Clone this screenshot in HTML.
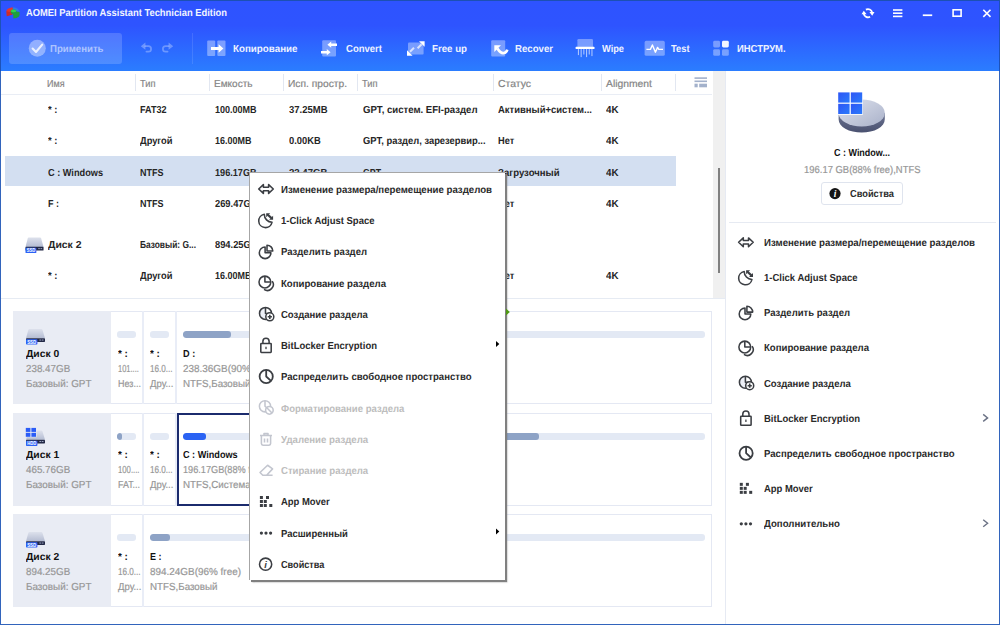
<!DOCTYPE html>
<html lang="ru">
<head>
<meta charset="utf-8">
<title>AOMEI Partition Assistant Technician Edition</title>
<style>
*{box-sizing:border-box;margin:0;padding:0}
html,body{width:1000px;height:625px;overflow:hidden;background:#fff}
body{position:relative;font-family:"Liberation Sans",sans-serif}
.a{position:absolute}
.t{position:absolute;white-space:pre;text-rendering:geometricPrecision;line-height:14px;height:14px;transform-origin:0 50%;display:block}
.title{font-size:10.2px;font-weight:700;color:#f2f5ff}
.tb{font-size:10.2px;font-weight:700;color:#eef2ff}
.apply{font-size:10.2px;font-weight:700;color:rgba(255,255,255,0.55)}
.hdr{font-size:10.2px;font-weight:400;color:#858585;-webkit-text-stroke:0.2px #858585}
.row{font-size:10.2px;font-weight:700;color:#262626}
.menu{font-size:10.2px;font-weight:700;color:#2a2a2a}
.menud{font-size:10.2px;font-weight:700;color:#bdbdbd}
.dname{font-size:10.2px;font-weight:700;color:#111111}
.dsub{font-size:10.2px;font-weight:400;color:#979797;-webkit-text-stroke:0.2px #979797}
.rp{font-size:10.2px;font-weight:700;color:#2a2a2a}
.rpt{font-size:10.2px;font-weight:700;color:#111111}
.rps{font-size:10.2px;font-weight:400;color:#979797;-webkit-text-stroke:0.2px #979797}
.btn{font-size:10.2px;font-weight:700;color:#2a2a2a}
svg{position:absolute;overflow:visible}
#win{position:absolute;left:0;top:0;width:1000px;height:625px;border:1px solid #3264bc;border-top:1px solid #1c50b4;pointer-events:none;z-index:50}
#titlebar{left:0;top:0;width:1000px;height:71px;background:linear-gradient(180deg,#2e53ff 0%,#2e54ff 36%,#2b7dff 100%)}
#apply{left:9px;top:33px;width:113px;height:31px;border-radius:3px;background:rgba(255,255,255,0.17)}
#tsep{left:192px;top:33px;width:1px;height:31px;background:rgba(255,255,255,0.11)}
#left{left:1px;top:71px;width:712px;height:553px;background:#fff}
#gap{left:713px;top:71px;width:12px;height:227px;background:#f0f0f0}
#gapline{left:725px;top:71px;width:1px;height:553px;background:#e6eaf3}
#right{left:726px;top:71px;width:273px;height:553px;background:#fff}
.hsep{width:1px;height:17px;top:74px;background:#e2e7f1}
#hline{left:1px;top:94px;width:711px;height:1px;background:#e9edf5}
#sel{left:5px;top:156px;width:671px;height:30px;background:#d3dff1}
#vscroll{left:718px;top:168px;width:2px;height:105px;background:#808080}
#divider{left:1px;top:298px;width:724px;height:1px;background:#e6ebf3}
.disk{left:13px;width:699px;height:93px;border:1px solid #e4e8f3;background:#fff}
.dlabel{left:13px;width:98px;height:93px;background:#e9ecf4}
.cellsep{width:2px;height:93px;background:#e9edf7}
.bar{height:7px;border-radius:3px;background:#e3e9f4;overflow:hidden}
.bar i{display:block;height:7px;border-radius:3px;background:#8ea3c6}
#selpart{left:177px;top:413px;width:200px;height:93px;border:2px solid #1b2b6d;background:#fff}
#menu{left:249px;top:172px;width:256px;height:408px;background:#fff;border-left:1px solid #a6a6a6;border-top:1px solid #a6a6a6;box-shadow:2px 2px 0 #808080,2.5px 2.5px 1.5px rgba(90,90,90,0.6)}
#rbtn{left:821px;top:182px;width:82px;height:23px;border:1px solid #dfe4ee;border-radius:3px;background:#fff}
#rsep{left:729px;top:222px;width:267px;height:1px;background:#e6eaf2}
</style>
</head>
<body>
<div class="a" id="titlebar"></div>
<div class="a" id="apply"></div>
<div class="a" id="tsep"></div>
<div class="a" id="left"></div>
<div class="a" id="gap"></div>
<div class="a" id="gapline"></div>
<div class="a" id="right"></div>
<div class="a hsep" style="left:135px"></div>
<div class="a hsep" style="left:209px"></div>
<div class="a hsep" style="left:283px"></div>
<div class="a hsep" style="left:357px"></div>
<div class="a hsep" style="left:493px"></div>
<div class="a hsep" style="left:601px"></div>
<div class="a hsep" style="left:675px"></div>
<div class="a" id="hline"></div>
<div class="a" id="sel"></div>
<div class="a" id="vscroll"></div>
<div class="a" id="divider"></div>

<!-- disk map -->
<div class="a disk" style="top:311px"></div>
<div class="a disk" style="top:413px"></div>
<div class="a disk" style="top:514px"></div>
<div class="a dlabel" style="top:311px"></div>
<div class="a dlabel" style="top:413px"></div>
<div class="a dlabel" style="top:514px"></div>
<div class="a cellsep" style="left:142px;top:311px"></div>
<div class="a cellsep" style="left:175px;top:311px"></div>
<div class="a cellsep" style="left:142px;top:413px"></div>
<div class="a cellsep" style="left:175px;top:413px"></div>
<div class="a cellsep" style="left:142px;top:514px"></div>
<div class="a" id="selpart"></div>
<div class="a bar" style="left:117px;top:331px;width:19px"></div>
<div class="a bar" style="left:150px;top:331px;width:19px"></div>
<div class="a bar" style="left:183px;top:331px;width:522px"><i style="width:48px"></i></div>
<div class="a bar" style="left:117px;top:433px;width:19px"><i style="width:5px;background:#8ea3c6"></i></div>
<div class="a bar" style="left:150px;top:433px;width:19px"></div>
<div class="a bar" style="left:183px;top:433px;width:186px"><i style="width:23px;background:#2b63f3"></i></div>
<div class="a bar" style="left:382px;top:433px;width:323px"><i style="width:157px"></i></div>
<div class="a bar" style="left:117px;top:534px;width:19px"></div>
<div class="a bar" style="left:150px;top:534px;width:555px"><i style="width:20px"></i></div>

<div class="a" id="rbtn"></div>
<div class="a" id="rsep"></div>
<svg width="1000" height="625" viewBox="0 0 1000 625" style="left:0;top:0">
<defs>
<linearGradient id="gdisk" x1="0" y1="0" x2="1" y2="1"><stop offset="0" stop-color="#dfe3ee"/><stop offset="1" stop-color="#a9b1c9"/></linearGradient>
<linearGradient id="gside" x1="0" y1="0" x2="0" y2="1"><stop offset="0" stop-color="#6b7391"/><stop offset="1" stop-color="#4a5170"/></linearGradient>
<linearGradient id="gwin" x1="0" y1="0" x2="1" y2="1"><stop offset="0" stop-color="#2f55f5"/><stop offset="1" stop-color="#2a7bfb"/></linearGradient>
<linearGradient id="gtop" x1="0" y1="0" x2="0" y2="1"><stop offset="0" stop-color="#dde1ec"/><stop offset="1" stop-color="#b4bcd2"/></linearGradient>
</defs>

<!-- app logo -->
<g>
 <path d="M6.4 11.2 Q6.2 8.2 12.6 7.2 L13.2 11.2 L10.4 12.2 L12.6 14.6 L6.8 16.2 Z" fill="#e8352f"/>
 <path d="M6.4 11.2 L6.8 16.2 L12.6 14.6 L12.4 12.5 Z" fill="#b42622" opacity=".55"/>
 <path d="M13 7.2 Q18.6 7.6 19.6 11.8 L16.6 11.6 L15.2 9.2 L13.2 9.6 Z" fill="#2a7de8"/>
 <path d="M10.4 11.2 Q10.6 9.4 13.6 9.4 Q16.4 9.4 16.4 11.4 L19.6 12 Q19.8 15.4 19 16.6 Q17 18.6 13.4 18.6 L13.2 14.4 Q10.4 13.6 10.4 11.2Z" fill="#1f9f3c"/>
 <ellipse cx="13.6" cy="10.9" rx="2.6" ry="1.3" fill="#31d353"/>
</g>

<!-- window controls -->
<g fill="none" stroke="#fff" stroke-width="1.8">
 <path d="M865.9 9.6 A4.3 4.3 0 0 1 872.2 12.6"/>
 <path d="M870.1 16.8 A4.3 4.3 0 0 1 863.8 13.8"/>
</g>
<path d="M869.4 12.1 H874.5 L872.2 15.7Z M866.6 14.3 H861.5 L863.8 10.7Z" fill="#fff"/>
<g fill="#fff">
 <rect x="893" y="9.2" width="9.4" height="1.6"/><rect x="893" y="12.4" width="9.4" height="1.6"/><rect x="893" y="15.6" width="9.4" height="1.6"/>
 <rect x="922.8" y="14.4" width="9.4" height="1.7"/>
</g>
<rect x="953.1" y="9.8" width="8" height="6.4" fill="none" stroke="#fff" stroke-width="1.6"/>
<path d="M983.3 9.7 L990.5 16.9 M990.5 9.7 L983.3 16.9" stroke="#fff" stroke-width="1.6" fill="none"/>

<!-- apply -->
<circle cx="37.3" cy="48.2" r="8.5" fill="#fff" fill-opacity=".38"/>
<path d="M32.6 48.6 L36 52 L42.2 44.6" fill="none" stroke="#fff" stroke-opacity=".8" stroke-width="2.1" stroke-linecap="round" stroke-linejoin="round"/>

<!-- undo / redo -->
<g fill="none" stroke="#fff" stroke-opacity=".3" stroke-width="1.7" stroke-linecap="round">
 <path d="M145.4 46.2 H148.4 A2.7 2.7 0 0 1 148.4 51.6 H146.4"/>
 <path d="M168.6 46.2 H165.6 A2.7 2.7 0 0 0 165.6 51.6 H167.6"/>
</g>
<path d="M140.8 46.2 L145.4 42.6 V49.8Z M173.2 46.2 L168.6 42.6 V49.8Z" fill="#fff" fill-opacity=".3"/>

<!-- copy -->
<rect x="207.2" y="40.5" width="8" height="15.4" rx="1" fill="#fff" fill-opacity=".38"/>
<rect x="217.3" y="40.5" width="8.2" height="15.4" rx="1" fill="#fff" fill-opacity=".38"/>
<path d="M211 47 H218.6 V44.2 L223.4 48.5 L218.6 52.8 V50 H211Z" fill="#fff"/>

<!-- convert -->
<rect x="322.2" y="40.2" width="13.8" height="16.2" rx="1" fill="#fff" fill-opacity=".36"/>
<path d="M337 43.5 H331.2 V41.6 L327.4 44.7 L331.2 47.8 V45.9 H337Z" fill="#fff"/>
<path d="M321 51 H326.8 V49.1 L330.6 52.2 L326.8 55.3 V53.4 H321Z" fill="#fff"/>

<!-- free up -->
<rect x="408" y="42.6" width="15.6" height="12" rx="1" fill="#fff" fill-opacity=".36"/>
<path d="M419 41.2 H424.6 V46.8Z" fill="#fff"/><path d="M407 50.2 V55.8 H412.6Z" fill="#fff"/>
<path d="M421.6 44.2 L417.6 48.2 M410 51.8 L414 47.8" stroke="#fff" stroke-opacity=".7" stroke-width="2" fill="none"/>

<!-- recover -->
<rect x="491.2" y="40.2" width="14" height="16.2" rx="1" fill="#fff" fill-opacity=".36"/>
<path d="M494.3 45.2 H501 L494.3 51.9Z" fill="#fff"/>
<path d="M497.4 48.4 Q500.6 53.4 503.8 53 Q506.4 52.6 507.3 49.6" fill="none" stroke="#fff" stroke-width="2.7"/>

<!-- wipe -->
<rect x="577.4" y="39" width="15.6" height="8.6" rx="1.2" fill="#fff" fill-opacity=".36"/>
<rect x="575.6" y="46.8" width="18.9" height="2.3" rx=".6" fill="#fff"/>
<g fill="#fff" fill-opacity=".6">
 <rect x="577.9" y="49.1" width="1.1" height="6"/><rect x="580.6" y="49.1" width="1.1" height="8"/><rect x="583.3" y="49.1" width="1.1" height="5.4"/>
 <rect x="586" y="49.1" width="1.1" height="8"/><rect x="588.7" y="49.1" width="1.1" height="5.4"/><rect x="591.4" y="49.1" width="1.1" height="7"/>
</g>

<!-- test -->
<rect x="644.6" y="40.8" width="20.2" height="15" rx="1.6" fill="#fff" fill-opacity=".36"/>
<path d="M646.4 49.4 H650.4 L652.4 45 L655.4 52.2 L657.6 47.4 L658.8 49.4 H663" fill="none" stroke="#fff" stroke-width="1.4" stroke-linejoin="round"/>

<!-- tools -->
<rect x="713.2" y="40.8" width="6.8" height="6.6" rx="1.4" fill="#fff" fill-opacity=".36"/>
<rect x="722" y="40.8" width="6.8" height="6.6" rx="1.4" fill="#f2f5ff"/>
<rect x="713.2" y="49.2" width="6.8" height="6.6" rx="1.4" fill="#fff" fill-opacity=".36"/>
<rect x="722" y="49.2" width="6.8" height="6.6" rx="1.4" fill="#fff" fill-opacity=".36"/>

<!-- header list icon -->
<g fill="#a3b1cb"><rect x="694.5" y="77.3" width="12.5" height="1.6"/><rect x="694.5" y="80.5" width="12.5" height="1.6"/><rect x="694.5" y="83.7" width="3.2" height="3.6"/><rect x="699.2" y="83.7" width="7.8" height="3.6"/></g>

<!-- disk icons in list/map -->
<g transform="translate(25.5 237.6) scale(0.95 1)">
  <path d="M3.4 0 H15.4 Q16.2 0 16.5 0.9 L19 9.3 H0 L2.3 0.9 Q2.6 0 3.4 0Z" fill="url(#gtop)"/>
  <rect x="0" y="9.2" width="19" height="3.8" rx="0.7" fill="#232946"/>
  <rect x="13.4" y="10.6" width="1.7" height="0.9" fill="#aab3cf"/><rect x="15.8" y="10.6" width="1.7" height="0.9" fill="#aab3cf"/>
  <rect x="0" y="10.2" width="11.4" height="5.3" rx="0.7" fill="#2c62f6"/>
  <text x="1.2" y="14.6" font-family="Liberation Sans, sans-serif" font-size="4.6" font-weight="700" fill="#fff" textLength="9" lengthAdjust="spacingAndGlyphs">SSD</text>
</g>
<g transform="translate(26 329)">
  <path d="M3.4 0 H15.4 Q16.2 0 16.5 0.9 L19 9.3 H0 L2.3 0.9 Q2.6 0 3.4 0Z" fill="url(#gtop)"/>
  <rect x="0" y="9.2" width="19" height="3.8" rx="0.7" fill="#232946"/>
  <rect x="13.4" y="10.6" width="1.7" height="0.9" fill="#aab3cf"/><rect x="15.8" y="10.6" width="1.7" height="0.9" fill="#aab3cf"/>
  <rect x="0" y="10.2" width="11.4" height="5.3" rx="0.7" fill="#2c62f6"/>
  <text x="1.2" y="14.6" font-family="Liberation Sans, sans-serif" font-size="4.6" font-weight="700" fill="#fff" textLength="9" lengthAdjust="spacingAndGlyphs">SSD</text>
</g>
<g transform="translate(26 430.5)">
  <path d="M3.4 0 H15.4 Q16.2 0 16.5 0.9 L19 9.3 H0 L2.3 0.9 Q2.6 0 3.4 0Z" fill="url(#gtop)"/>
  <rect x="0" y="9.2" width="19" height="3.8" rx="0.7" fill="#232946"/>
  <rect x="13.4" y="10.6" width="1.7" height="0.9" fill="#aab3cf"/><rect x="15.8" y="10.6" width="1.7" height="0.9" fill="#aab3cf"/>
  <rect x="0" y="10.2" width="11.4" height="5.3" rx="0.7" fill="#2c62f6"/>
  <text x="1.2" y="14.6" font-family="Liberation Sans, sans-serif" font-size="4.6" font-weight="700" fill="#fff" textLength="9" lengthAdjust="spacingAndGlyphs">HDD</text>
</g>
<g transform="translate(26 532)">
  <path d="M3.4 0 H15.4 Q16.2 0 16.5 0.9 L19 9.3 H0 L2.3 0.9 Q2.6 0 3.4 0Z" fill="url(#gtop)"/>
  <rect x="0" y="9.2" width="19" height="3.8" rx="0.7" fill="#232946"/>
  <rect x="13.4" y="10.6" width="1.7" height="0.9" fill="#aab3cf"/><rect x="15.8" y="10.6" width="1.7" height="0.9" fill="#aab3cf"/>
  <rect x="0" y="10.2" width="11.4" height="5.3" rx="0.7" fill="#2c62f6"/>
  <text x="1.2" y="14.6" font-family="Liberation Sans, sans-serif" font-size="4.6" font-weight="700" fill="#fff" textLength="9" lengthAdjust="spacingAndGlyphs">SSD</text>
</g>
<!-- windows logo on disk 1 -->
<rect x="25.3" y="427.4" width="11.2" height="9.8" fill="#e9ecf4"/><g fill="#2a5cf7"><rect x="25.8" y="427.9" width="4.6" height="4"/><rect x="31.4" y="427.9" width="4.6" height="4"/><rect x="25.8" y="432.8" width="4.6" height="4"/><rect x="31.4" y="432.8" width="4.6" height="4"/></g>

<!-- green marker -->


<!-- right panel big icon -->
<path d="M838.6 113 V119.3 A23.1 13.3 0 0 0 884.8 119.3 V113Z" fill="url(#gside)"/>
<ellipse cx="861.7" cy="113" rx="23.1" ry="13.4" fill="url(#gdisk)"/>
<rect x="837.4" y="91.8" width="25.4" height="23" fill="#fff"/>
<g fill="url(#gwin)"><rect x="838.2" y="92.4" width="11.4" height="10.2"/><rect x="850.8" y="92.4" width="11.4" height="10.2"/><rect x="838.2" y="103.8" width="11.4" height="10.2"/><rect x="850.8" y="103.8" width="11.4" height="10.2"/></g>

<!-- properties button icon -->
<circle cx="835" cy="193.6" r="5.6" fill="#151515"/>
<text x="835" y="197" text-anchor="middle" font-family="Liberation Serif, serif" font-size="9.5" font-weight="700" font-style="italic" fill="#fff">i</text>
<g transform="translate(745.9,242.3)"><g fill="none" stroke="#3b3e43" stroke-width="1.55" stroke-linejoin="round"><path d="M-7.3,0 L-2.6,-4.4 V-1.75 H2.6 V-4.4 L7.3,0 L2.6,4.4 V1.75 H-2.6 V4.4Z"/></g></g>
<g transform="translate(745.9,277.45)"><g fill="none" stroke="#3b3e43" stroke-width="1.55" stroke-linejoin="round"><path d="M-1.7,-5.95 A6.7 6.7 0 1 0 6,2.1 A8 8 0 0 1 -1.7,-5.95Z"/></g><path d="M0.2,-7.1 H4.2 L0.2,-3.1Z M7.1,-0.5 H3.1 L7.1,-4.5Z" fill="#3b3e43"/><path d="M1.8,-5.5 L5.5,-2.1" stroke="#3b3e43" stroke-width="2.2" fill="none"/></g>
<g transform="translate(745.9,312.6)"><g fill="none" stroke="#3b3e43" stroke-width="1.55" stroke-linejoin="round"><path d="M-0.9,-4.5 A5.8 5.8 0 1 0 4.9,1.3 H-0.9Z"/><path d="M1,-6.3 A5.8 5.8 0 0 1 6.8,-0.5 H1Z"/></g></g>
<g transform="translate(745.9,347.75)"><g fill="none" stroke="#3b3e43" stroke-width="1.55" stroke-linejoin="round"><circle cx="-1.1" cy="-0.75" r="5.9"/><path d="M-1.1,-6.65 V-0.75 H4.8"/><path d="M6.23,-1.63 A5.9 5.9 0 0 1 -1.98,6.58"/></g></g>
<g transform="translate(745.9,382.9)"><path d="M-0.5,-6.6 A6 6 0 0 0 -0.5,5.4Z" fill="#edf0f7"/><g fill="none" stroke="#3b3e43" stroke-width="1.55" stroke-linejoin="round"><circle cx="-0.5" cy="-0.6" r="6"/><path d="M-0.5,-6.6 V-0.6 H5.5"/><circle cx="3.8" cy="2.8" r="4" fill="#fff"/></g><path d="M3.8,0.7 V4.9 M1.7,2.8 H5.9" stroke="#3b3e43" stroke-width="1.6" fill="none"/></g>
<g transform="translate(745.9,418.05)"><g fill="none" stroke="#3b3e43" stroke-width="1.55" stroke-linejoin="round"><rect x="-5.2" y="-1.8" width="10.4" height="9" rx="0.6"/><path d="M-3.1,-1.8 V-4 A3.1 3.1 0 0 1 3.1,-4 V-1.8"/></g><rect x="-0.65" y="1.5" width="1.3" height="2.4" fill="#3b3e43"/></g>
<g transform="translate(745.9,453.2)"><g stroke-width="1.8" fill="none" stroke="#3b3e43" stroke-width="1.55" stroke-linejoin="round"><circle cx="0.2" cy="0" r="6.6"/><path d="M0.2,-6.6 V0 L5,4.3"/></g></g>
<g transform="translate(745.9,488.35)"><g fill="#3b3e43"><rect x="-6.1" y="-5.5" width="3" height="3"/><rect x="0.0" y="-5.5" width="3" height="3"/><rect x="-6.1" y="-1.5" width="3" height="3"/><rect x="-2.2" y="-1.5" width="3" height="3"/><rect x="-6.1" y="2.5" width="3" height="3"/><rect x="-2.2" y="2.5" width="3" height="3"/><rect x="3.3" y="2.5" width="3" height="3"/></g></g>
<g transform="translate(745.9,523.5)"><g fill="#3b3e43"><circle cx="-4.6" cy="0.3" r="1.6"/><circle cx="0" cy="0.3" r="1.6"/><circle cx="4.6" cy="0.3" r="1.6"/></g></g>
<path d="M983.2,414.4 L987.6,417.9 L983.2,421.4 M983.2,519.8 L987.6,523.3 L983.2,526.8" fill="none" stroke="#6b7285" stroke-width="1.4"/>
</svg>

<span class="t title" style="left:26.0px;top:7.0px;transform:scaleX(0.920)">AOMEI Partition Assistant Technician Edition</span>
<span class="t apply" style="left:50.0px;top:43.0px;transform:scaleX(0.944)">Применить</span>
<span class="t tb" style="left:233.0px;top:43.0px;transform:scaleX(0.960)">Копирование</span>
<span class="t tb" style="left:345.6px;top:43.0px;transform:scaleX(0.935)">Convert</span>
<span class="t tb" style="left:432.4px;top:43.0px;transform:scaleX(0.951)">Free up</span>
<span class="t tb" style="left:515.4px;top:43.0px;transform:scaleX(0.945)">Recover</span>
<span class="t tb" style="left:601.6px;top:43.0px;transform:scaleX(0.907)">Wipe</span>
<span class="t tb" style="left:671.0px;top:43.0px;transform:scaleX(0.916)">Test</span>
<span class="t tb" style="left:737.0px;top:43.0px;transform:scaleX(0.927)">ИНСТРУМ.</span>
<span class="t hdr" style="left:46.5px;top:78.0px;transform:scaleX(0.882)">Имя</span>
<span class="t hdr" style="left:139.5px;top:78.0px;transform:scaleX(0.913)">Тип</span>
<span class="t hdr" style="left:213.5px;top:78.0px;transform:scaleX(0.984)">Емкость</span>
<span class="t hdr" style="left:287.5px;top:78.0px;transform:scaleX(1.005)">Исп. простр.</span>
<span class="t hdr" style="left:362.0px;top:78.0px;transform:scaleX(0.913)">Тип</span>
<span class="t hdr" style="left:497.8px;top:78.0px;transform:scaleX(1.024)">Статус</span>
<span class="t hdr" style="left:606.0px;top:78.0px;transform:scaleX(1.015)">Alignment</span>
<span class="t row" style="left:48.3px;top:104.0px;transform:scaleX(0.933)">* :</span>
<span class="t row" style="left:140.0px;top:104.0px;transform:scaleX(0.888)">FAT32</span>
<span class="t row" style="left:214.8px;top:104.0px;transform:scaleX(0.885)">100.00MB</span>
<span class="t row" style="left:289.0px;top:104.0px;transform:scaleX(0.931)">37.25MB</span>
<span class="t row" style="left:363.3px;top:104.0px;transform:scaleX(0.941)">GPT, систем. EFI-раздел</span>
<span class="t row" style="left:498.2px;top:104.0px;transform:scaleX(0.929)">Активный+систем...</span>
<span class="t row" style="left:606.3px;top:104.0px;transform:scaleX(0.959)">4K</span>
<span class="t row" style="left:48.3px;top:135.0px;transform:scaleX(0.933)">* :</span>
<span class="t row" style="left:140.0px;top:135.0px;transform:scaleX(0.913)">Другой</span>
<span class="t row" style="left:214.8px;top:135.0px;transform:scaleX(0.880)">16.00MB</span>
<span class="t row" style="left:289.0px;top:135.0px;transform:scaleX(0.918)">0.00KB</span>
<span class="t row" style="left:363.3px;top:135.0px;transform:scaleX(0.919)">GPT, раздел, зарезервир...</span>
<span class="t row" style="left:498.2px;top:135.0px;transform:scaleX(0.906)">Нет</span>
<span class="t row" style="left:606.3px;top:135.0px;transform:scaleX(0.959)">4K</span>
<span class="t row" style="left:48.3px;top:167.0px;transform:scaleX(0.901)">C : Windows</span>
<span class="t row" style="left:140.0px;top:167.0px;transform:scaleX(0.883)">NTFS</span>
<span class="t row" style="left:214.8px;top:167.0px;transform:scaleX(0.896)">196.17GB</span>
<span class="t row" style="left:289.0px;top:167.0px;transform:scaleX(0.944)">22.47GB</span>
<span class="t row" style="left:363.3px;top:167.0px;transform:scaleX(0.859)">GPT</span>
<span class="t row" style="left:498.2px;top:167.0px;transform:scaleX(0.936)">Загрузочный</span>
<span class="t row" style="left:606.3px;top:167.0px;transform:scaleX(0.959)">4K</span>
<span class="t row" style="left:48.3px;top:198.0px;transform:scaleX(0.883)">F :</span>
<span class="t row" style="left:140.0px;top:198.0px;transform:scaleX(0.883)">NTFS</span>
<span class="t row" style="left:214.8px;top:198.0px;transform:scaleX(0.915)">269.47GB</span>
<span class="t row" style="left:289.0px;top:198.0px;transform:scaleX(0.918)">0.00KB</span>
<span class="t row" style="left:363.3px;top:198.0px;transform:scaleX(0.859)">GPT</span>
<span class="t row" style="left:498.2px;top:198.0px;transform:scaleX(0.906)">Нет</span>
<span class="t row" style="left:606.3px;top:198.0px;transform:scaleX(0.959)">4K</span>
<span class="t row" style="left:48.3px;top:239.0px;transform:scaleX(1.022)">Диск 2</span>
<span class="t row" style="left:140.0px;top:239.0px;transform:scaleX(0.823)">Базовый: G...</span>
<span class="t row" style="left:214.8px;top:239.0px;transform:scaleX(0.915)">894.25GB</span>
<span class="t row" style="left:48.3px;top:270.0px;transform:scaleX(0.933)">* :</span>
<span class="t row" style="left:140.0px;top:270.0px;transform:scaleX(0.913)">Другой</span>
<span class="t row" style="left:214.8px;top:270.0px;transform:scaleX(0.880)">16.00MB</span>
<span class="t row" style="left:289.0px;top:270.0px;transform:scaleX(0.918)">0.00KB</span>
<span class="t row" style="left:363.3px;top:270.0px;transform:scaleX(0.859)">GPT</span>
<span class="t row" style="left:498.2px;top:270.0px;transform:scaleX(0.906)">Нет</span>
<span class="t row" style="left:606.3px;top:270.0px;transform:scaleX(0.959)">4K</span>
<span class="t dname" style="left:26.0px;top:348.0px;transform:scaleX(1.016)">Диск 0</span>
<span class="t dsub" style="left:26.0px;top:363.0px;transform:scaleX(0.963)">238.47GB</span>
<span class="t dsub" style="left:26.0px;top:378.0px;transform:scaleX(0.970)">Базовый: GPT</span>
<span class="t dname" style="left:26.0px;top:449.0px;transform:scaleX(1.016)">Диск 1</span>
<span class="t dsub" style="left:26.0px;top:464.0px;transform:scaleX(0.963)">465.76GB</span>
<span class="t dsub" style="left:26.0px;top:479.0px;transform:scaleX(0.970)">Базовый: GPT</span>
<span class="t dname" style="left:26.0px;top:551.0px;transform:scaleX(1.016)">Диск 2</span>
<span class="t dsub" style="left:26.0px;top:566.0px;transform:scaleX(0.963)">894.25GB</span>
<span class="t dsub" style="left:26.0px;top:581.0px;transform:scaleX(0.970)">Базовый: GPT</span>
<span class="t dname" style="left:117.5px;top:348.0px;transform:scaleX(0.972)">* :</span>
<span class="t dsub" style="left:117.5px;top:363.0px;transform:scaleX(0.734)">101....</span>
<span class="t dsub" style="left:117.5px;top:378.0px;transform:scaleX(0.882)">Нез...</span>
<span class="t dname" style="left:150.3px;top:348.0px;transform:scaleX(0.972)">* :</span>
<span class="t dsub" style="left:150.3px;top:363.0px;transform:scaleX(0.798)">16.0...</span>
<span class="t dsub" style="left:150.3px;top:378.0px;transform:scaleX(0.935)">Дру...</span>
<span class="t dname" style="left:183.3px;top:348.0px;transform:scaleX(0.897)">D :</span>
<span class="t dsub" style="left:183.3px;top:363.0px;transform:scaleX(0.974)">238.36GB(90% free)</span>
<span class="t dsub" style="left:183.3px;top:378.0px;transform:scaleX(0.960)">NTFS,Базовый</span>
<span class="t dname" style="left:117.5px;top:449.0px;transform:scaleX(0.972)">* :</span>
<span class="t dsub" style="left:117.5px;top:464.0px;transform:scaleX(0.759)">100....</span>
<span class="t dsub" style="left:117.5px;top:479.0px;transform:scaleX(0.870)">FAT...</span>
<span class="t dname" style="left:150.3px;top:449.0px;transform:scaleX(0.972)">* :</span>
<span class="t dsub" style="left:150.3px;top:464.0px;transform:scaleX(0.798)">16.0...</span>
<span class="t dsub" style="left:150.3px;top:479.0px;transform:scaleX(0.935)">Дру...</span>
<span class="t dname" style="left:183.3px;top:449.0px;transform:scaleX(0.895)">C : Windows</span>
<span class="t dsub" style="left:183.3px;top:464.0px;transform:scaleX(0.899)">196.17GB(88% free)</span>
<span class="t dsub" style="left:183.3px;top:479.0px;transform:scaleX(0.960)">NTFS,Система</span>
<span class="t dname" style="left:117.5px;top:551.0px;transform:scaleX(0.972)">* :</span>
<span class="t dsub" style="left:117.5px;top:566.0px;transform:scaleX(0.798)">16.0...</span>
<span class="t dsub" style="left:117.5px;top:581.0px;transform:scaleX(0.935)">Дру...</span>
<span class="t dname" style="left:150.3px;top:551.0px;transform:scaleX(0.882)">E :</span>
<span class="t dsub" style="left:150.3px;top:566.0px;transform:scaleX(0.974)">894.24GB(96% free)</span>
<span class="t dsub" style="left:150.3px;top:581.0px;transform:scaleX(0.960)">NTFS,Базовый</span>
<span class="t rpt" style="left:834.0px;top:147.0px;transform:scaleX(0.882)">C : Window...</span>
<span class="t rps" style="left:803.8px;top:164.0px;transform:scaleX(0.927)">196.17 GB(88% free),NTFS</span>
<span class="t btn" style="left:850.0px;top:188.0px;transform:scaleX(0.909)">Свойства</span>
<span class="t rp" style="left:763.7px;top:237.0px;transform:scaleX(0.947)">Изменение размера/перемещение разделов</span>
<span class="t rp" style="left:763.7px;top:272.0px;transform:scaleX(0.931)">1-Click Adjust Space</span>
<span class="t rp" style="left:763.7px;top:307.0px;transform:scaleX(0.933)">Разделить раздел</span>
<span class="t rp" style="left:763.7px;top:342.0px;transform:scaleX(0.943)">Копирование раздела</span>
<span class="t rp" style="left:763.7px;top:378.0px;transform:scaleX(0.934)">Создание раздела</span>
<span class="t rp" style="left:763.7px;top:413.0px;transform:scaleX(0.932)">BitLocker Encryption</span>
<span class="t rp" style="left:763.7px;top:448.0px;transform:scaleX(0.939)">Распределить свободное пространство</span>
<span class="t rp" style="left:763.7px;top:483.0px;transform:scaleX(0.927)">App Mover</span>
<span class="t rp" style="left:763.7px;top:518.0px;transform:scaleX(0.945)">Дополнительно</span>
<div class="a" id="menu"></div>
<svg width="1000" height="625" viewBox="0 0 1000 625" style="left:0;top:0">
<g transform="translate(266,189.0)"><g fill="none" stroke="#3b3e43" stroke-width="1.55" stroke-linejoin="round"><path d="M-7.3,0 L-2.6,-4.4 V-1.75 H2.6 V-4.4 L7.3,0 L2.6,4.4 V1.75 H-2.6 V4.4Z"/></g></g>
<g transform="translate(266,220.25)"><g fill="none" stroke="#3b3e43" stroke-width="1.55" stroke-linejoin="round"><path d="M-1.7,-5.95 A6.7 6.7 0 1 0 6,2.1 A8 8 0 0 1 -1.7,-5.95Z"/></g><path d="M0.2,-7.1 H4.2 L0.2,-3.1Z M7.1,-0.5 H3.1 L7.1,-4.5Z" fill="#3b3e43"/><path d="M1.8,-5.5 L5.5,-2.1" stroke="#3b3e43" stroke-width="2.2" fill="none"/></g>
<g transform="translate(266,251.5)"><g fill="none" stroke="#3b3e43" stroke-width="1.55" stroke-linejoin="round"><path d="M-0.9,-4.5 A5.8 5.8 0 1 0 4.9,1.3 H-0.9Z"/><path d="M1,-6.3 A5.8 5.8 0 0 1 6.8,-0.5 H1Z"/></g></g>
<g transform="translate(266,282.75)"><g fill="none" stroke="#3b3e43" stroke-width="1.55" stroke-linejoin="round"><circle cx="-1.1" cy="-0.75" r="5.9"/><path d="M-1.1,-6.65 V-0.75 H4.8"/><path d="M6.23,-1.63 A5.9 5.9 0 0 1 -1.98,6.58"/></g></g>
<g transform="translate(266,314.0)"><path d="M-0.5,-6.6 A6 6 0 0 0 -0.5,5.4Z" fill="#edf0f7"/><g fill="none" stroke="#3b3e43" stroke-width="1.55" stroke-linejoin="round"><circle cx="-0.5" cy="-0.6" r="6"/><path d="M-0.5,-6.6 V-0.6 H5.5"/><circle cx="3.8" cy="2.8" r="4" fill="#fff"/></g><path d="M3.8,0.7 V4.9 M1.7,2.8 H5.9" stroke="#3b3e43" stroke-width="1.6" fill="none"/></g>
<g transform="translate(266,345.25)"><g fill="none" stroke="#3b3e43" stroke-width="1.55" stroke-linejoin="round"><rect x="-5.2" y="-1.8" width="10.4" height="9" rx="0.6"/><path d="M-3.1,-1.8 V-4 A3.1 3.1 0 0 1 3.1,-4 V-1.8"/></g><rect x="-0.65" y="1.5" width="1.3" height="2.4" fill="#3b3e43"/></g>
<g transform="translate(266,376.5)"><g stroke-width="1.8" fill="none" stroke="#3b3e43" stroke-width="1.55" stroke-linejoin="round"><circle cx="0.2" cy="0" r="6.6"/><path d="M0.2,-6.6 V0 L5,4.3"/></g></g>
<g transform="translate(266,407.75)"><g fill="none" stroke="#c3c6cf" stroke-width="1.55" stroke-linejoin="round"><circle cx="-1" cy="-1.5" r="5.6"/><path d="M-1,-7.1 V-1.5 L2,1.2"/><circle cx="3.4" cy="2.6" r="3.8" fill="#fff"/><path d="M0.8,0 L6,5.2"/></g></g>
<g transform="translate(266,439.0)"><g fill="none" stroke="#c3c6cf" stroke-width="1.55" stroke-linejoin="round"><path d="M-6,-3.6 H6 M-2,-3.6 V-5.4 H2 V-3.6 M-4.6,-3.4 V4.6 Q-4.6,6.2 -3,6.2 H3 Q4.6,6.2 4.6,4.6 V-3.4 M-1.5,-0.6 V3.4 M1.5,-0.6 V3.4"/></g></g>
<g transform="translate(266,470.25)"><g fill="none" stroke="#c3c6cf" stroke-width="1.55" stroke-linejoin="round"><path d="M1.6,-5 L6.6,-1.4 L0.6,5 H-3.2 L-6,2.2Z M-3,5 H6.6"/></g></g>
<g transform="translate(266,501.5)"><g fill="#3b3e43"><rect x="-6.1" y="-5.5" width="3" height="3"/><rect x="0.0" y="-5.5" width="3" height="3"/><rect x="-6.1" y="-1.5" width="3" height="3"/><rect x="-2.2" y="-1.5" width="3" height="3"/><rect x="-6.1" y="2.5" width="3" height="3"/><rect x="-2.2" y="2.5" width="3" height="3"/><rect x="3.3" y="2.5" width="3" height="3"/></g></g>
<g transform="translate(266,532.75)"><g fill="#3b3e43"><circle cx="-4.6" cy="0.3" r="1.6"/><circle cx="0" cy="0.3" r="1.6"/><circle cx="4.6" cy="0.3" r="1.6"/></g></g>
<g transform="translate(266,564.0)"><g fill="none" stroke="#3b3e43" stroke-width="1.55" stroke-linejoin="round"><circle cx="-0.4" cy="0.2" r="6.1"/></g><text x="-0.5" y="3.6" text-anchor="middle" font-family="Liberation Sans, sans-serif" font-style="italic" font-weight="700" font-size="9.5" fill="#3b3e43">i</text></g>
<path d="M496,341 L499.3,344 L496,347Z M496,528.5 L499.3,531.5 L496,534.5Z" fill="#000"/>
<path d="M506,308.4 L509.8,311.9 L506,315.6Z" fill="#4f9a12"/>
</svg>
<span class="t menu" style="left:281.0px;top:184.0px;transform:scaleX(0.947)">Изменение размера/перемещение разделов</span>
<span class="t menu" style="left:281.0px;top:215.0px;transform:scaleX(0.931)">1-Click Adjust Space</span>
<span class="t menu" style="left:281.0px;top:246.0px;transform:scaleX(0.933)">Разделить раздел</span>
<span class="t menu" style="left:281.0px;top:278.0px;transform:scaleX(0.943)">Копирование раздела</span>
<span class="t menu" style="left:281.0px;top:309.0px;transform:scaleX(0.934)">Создание раздела</span>
<span class="t menu" style="left:281.0px;top:340.0px;transform:scaleX(0.932)">BitLocker Encryption</span>
<span class="t menu" style="left:281.0px;top:371.0px;transform:scaleX(0.939)">Распределить свободное пространство</span>
<span class="t menud" style="left:281.0px;top:403.0px;transform:scaleX(0.936)">Форматирование раздела</span>
<span class="t menud" style="left:281.0px;top:434.0px;transform:scaleX(0.947)">Удаление раздела</span>
<span class="t menud" style="left:281.0px;top:465.0px;transform:scaleX(0.940)">Стирание раздела</span>
<span class="t menu" style="left:281.0px;top:496.0px;transform:scaleX(0.927)">App Mover</span>
<span class="t menu" style="left:281.0px;top:528.0px;transform:scaleX(0.929)">Расширенный</span>
<span class="t menu" style="left:281.0px;top:559.0px;transform:scaleX(0.896)">Свойства</span>
<div id="win"></div>
<div class="a" style="left:0;top:0;width:1px;height:71px;background:#1d52b8;z-index:51"></div>
<div class="a" style="left:999px;top:0;width:1px;height:71px;background:#1d52b8;z-index:51"></div>
</body>
</html>
